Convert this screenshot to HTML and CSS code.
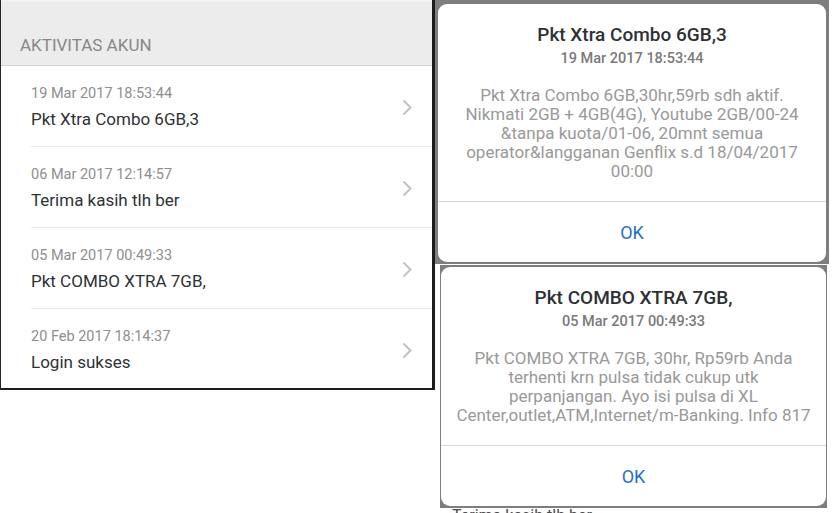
FILE: index.html
```html
<!DOCTYPE html>
<html lang="id">
<head>
  <meta charset="UTF-8" />
  <title>Aktivitas Akun</title>
  <link rel="stylesheet" href="styles.css">
</head>
<body>

  <div class="account">
    <div class="section-head">AKTIVITAS AKUN</div>

    <div class="item">
      <div class="item-inner">
        <div class="item-text">
          <div class="item-date">19 Mar 2017 18:53:44</div>
          <div class="item-title">Pkt Xtra Combo 6GB,3</div>
        </div>
        <svg class="chevron" width="10" height="17" viewBox="0 0 10 17"><polyline points="1.5,1.5 8.5,8.5 1.5,15.5" /></svg>
      </div>
    </div>

    <div class="item">
      <div class="item-inner">
        <div class="item-text">
          <div class="item-date">06 Mar 2017 12:14:57</div>
          <div class="item-title">Terima kasih tlh ber</div>
        </div>
        <svg class="chevron" width="10" height="17" viewBox="0 0 10 17"><polyline points="1.5,1.5 8.5,8.5 1.5,15.5" /></svg>
      </div>
    </div>

    <div class="item">
      <div class="item-inner">
        <div class="item-text">
          <div class="item-date">05 Mar 2017 00:49:33</div>
          <div class="item-title">Pkt COMBO XTRA 7GB,</div>
        </div>
        <svg class="chevron" width="10" height="17" viewBox="0 0 10 17"><polyline points="1.5,1.5 8.5,8.5 1.5,15.5" /></svg>
      </div>
    </div>

    <div class="item item-last">
      <div class="item-inner">
        <div class="item-text">
          <div class="item-date">20 Feb 2017 18:14:37</div>
          <div class="item-title">Login sukses</div>
        </div>
        <svg class="chevron" width="10" height="17" viewBox="0 0 10 17"><polyline points="1.5,1.5 8.5,8.5 1.5,15.5" /></svg>
      </div>
    </div>
  </div>

  <div class="dialogs">
    <div class="frame frame-first">
      <div class="dialog">
        <div class="dlg-head">
          <div class="dlg-title">Pkt Xtra Combo 6GB,3</div>
          <div class="dlg-date">19 Mar 2017 18:53:44</div>
        </div>
        <p class="dlg-body">
          Pkt Xtra Combo 6GB,30hr,59rb sdh aktif.<br>
          Nikmati 2GB + 4GB(4G), Youtube 2GB/00-24<br>
          &amp;tanpa kuota/01-06, 20mnt semua<br>
          operator&amp;langganan Genflix s.d 18/04/2017<br>
          00:00
        </p>
        <div class="dlg-actions">OK</div>
      </div>
    </div>

    <div class="frame frame-second">
      <div class="dialog">
        <div class="dlg-head">
          <div class="dlg-title">Pkt COMBO XTRA 7GB,</div>
          <div class="dlg-date">05 Mar 2017 00:49:33</div>
        </div>
        <p class="dlg-body">
          Pkt COMBO XTRA 7GB, 30hr, Rp59rb Anda<br>
          terhenti krn pulsa tidak cukup utk<br>
          perpanjangan. Ayo isi pulsa di XL<br>
          Center,outlet,ATM,Internet/m-Banking. Info 817
        </p>
        <div class="dlg-actions">OK</div>
      </div>
    </div>

    <div class="peek">Terima kasih tlh ber</div>
  </div>

</body>
</html>
```

FILE: styles.css
```css
* {
  box-sizing: border-box;
}

body {
  margin: 0;
  width: 836px;
  height: 513px;
  overflow: hidden;
  background: #ffffff;
  font-family: Roboto, "Noto Sans", sans-serif;
  display: flex;
  align-items: flex-start;
}

/* left: account activity list */

.account {
  width: 435px;
  background: #ffffff;
  border-left: 1px solid #262626;
  border-right: 3px solid #1c1c1c;
  border-bottom: 2px solid #1c1c1c;
}

.section-head {
  height: 66px;
  padding: 0 19px 10px;
  display: flex;
  align-items: flex-end;
  background: #ececec;
  border-top: 2px solid #f3f3f3;
  border-bottom: 1px solid #d2d2d2;
  color: #878787;
  font-size: 17px;
  line-height: 20px;
}

.item {
  padding-left: 30px;
}

.item-inner {
  height: 81px;
  display: flex;
  align-items: center;
  padding-right: 20px;
  border-bottom: 1px solid #e8e8e8;
}

.item-last .item-inner {
  height: 79px;
  border-bottom: none;
}

.item-text {
  flex: 1;
  padding-top: 2px;
}

.item-date {
  font-size: 14.5px;
  line-height: 20px;
  color: #8e8e8e;
}

.item-title {
  margin-top: 4px;
  font-size: 17px;
  line-height: 22px;
  color: #2e3236;
}

.chevron {
  margin-top: 3px;
}

.chevron polyline {
  fill: none;
  stroke: #c2c2c2;
  stroke-width: 2;
}

/* right: message dialogs */

.dialogs {
  width: 394px;
  display: flex;
  flex-direction: column;
}

.frame {
  background: #7e7e7e;
}

.frame-first {
  padding: 4px 3px 2px 3px;
}

.frame-second {
  margin-top: 1px;
  margin-left: 5px;
  width: 387px;
  padding: 2px 1px 2px 1px;
}

.dialog {
  background: #ffffff;
  border-radius: 9px;
  text-align: center;
  overflow: hidden;
}

.dlg-head {
  padding: 19px 16px 0;
}

.dlg-title {
  font-size: 19px;
  font-weight: 500;
  line-height: 24px;
  color: #2d3135;
}

.dlg-date {
  margin-top: 2px;
  font-size: 14.5px;
  font-weight: 500;
  line-height: 20px;
  color: #7a7a7a;
}

.dlg-body {
  margin: 17px 0 0;
  padding: 0 6px 20px;
  font-size: 17px;
  line-height: 19px;
  color: #999999;
  white-space: nowrap;
}

.dlg-actions {
  height: 61px;
  display: flex;
  align-items: center;
  justify-content: center;
  border-top: 1px solid #d8d8d8;
  font-size: 18px;
  color: #1f72c8;
}

.peek {
  margin-left: 5px;
  padding-left: 12px;
  font-size: 16px;
  line-height: 16px;
  color: #4a4a4a;
}
```
